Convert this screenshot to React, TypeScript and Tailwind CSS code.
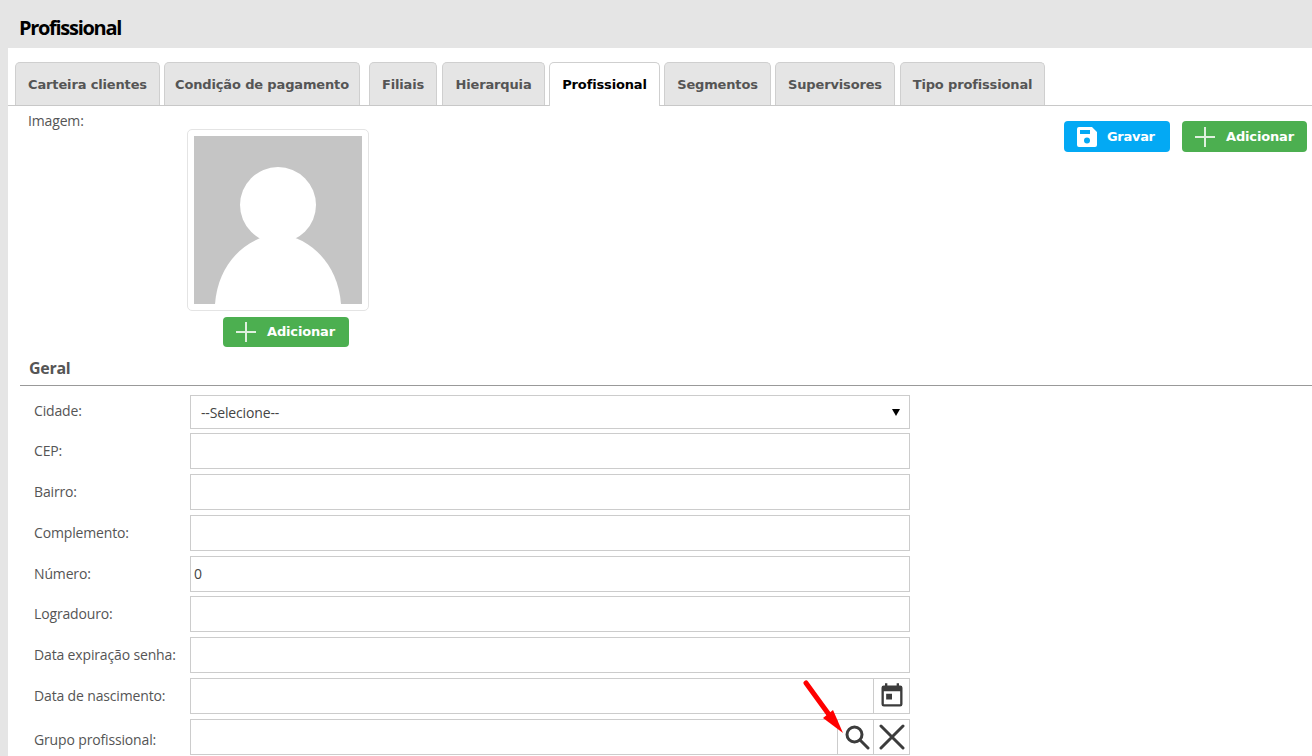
import { Fragment } from "react";

const tabs = [
  { label: "Carteira clientes", w: "w-[145px]", mr: "mr-[4px]" },
  { label: "Condição de pagamento", w: "w-[196px]", mr: "mr-[9px]" },
  { label: "Filiais", w: "w-[68px]", mr: "mr-[5px]" },
  { label: "Hierarquia", w: "w-[103px]", mr: "mr-[4px]" },
  { label: "Profissional", w: "w-[111px]", mr: "mr-[4px]", active: true },
  { label: "Segmentos", w: "w-[107px]", mr: "mr-[4px]" },
  { label: "Supervisores", w: "w-[120px]", mr: "mr-[5px]" },
  { label: "Tipo profissional", w: "w-[145px]", mr: "" },
];

const rows = [
  { label: "CEP:", h: "mb-[5px]" },
  { label: "Bairro:", h: "mb-[5px]" },
  { label: "Complemento:", h: "mb-[5px]" },
  { label: "Número:", h: "mb-[4px]", value: "0" },
  { label: "Logradouro:", h: "mb-[5px]" },
  { label: "Data expiração senha:", h: "mb-[5px]" },
];

function Plus({ className }: { className: string }) {
  return (
    <svg viewBox="0 0 20 20" className={className}>
      <path d="M0 10H20M10 0V20" stroke="#dff0df" strokeWidth="2" fill="none" />
    </svg>
  );
}

function AddButton({ className }: { className: string }) {
  return (
    <button className={`flex items-center rounded-[4px] bg-[#4caf50] pl-[13px] font-['DejaVu_Sans',sans-serif] text-[13px] font-bold tracking-[-0.15px] text-white ${className}`}>
      <Plus className="mr-[11px] h-[20px] w-[20px]" />
      Adicionar
    </button>
  );
}

function Field({ value }: { value?: string }) {
  return (
    <div className="flex h-[36px] w-[720px] items-center border border-[#cccccc] bg-white pb-[1px] pl-[3px] text-[14px] text-[#444444]">
      {value}
    </div>
  );
}

export default function App() {
  return (
    <div className="h-[756px] overflow-hidden bg-[#e5e5e5] font-['Open_Sans','Liberation_Sans',sans-serif] text-[14px] tracking-[-0.15px]">
      <div className="flex h-[48px] items-center pl-[19px] pt-[7px] text-[20px] font-bold tracking-[-1.3px] text-black">
        Profissional
      </div>

      <div className="relative ml-[8px] h-[708px] bg-white">
        <div className="flex h-[58px] items-end border-b border-[#c8c8c8] pl-[7px]">
          {tabs.map((t) => (
            <div
              key={t.label}
              className={`flex items-center justify-center rounded-t-[5px] border border-b-0 border-[#cfcfcf] font-['DejaVu_Sans',sans-serif] text-[13px] font-bold tracking-[-0.15px] ${t.w} ${t.mr} ${
                t.active ? "mb-[-1px] h-[44px] bg-white pt-[1px] text-black" : "h-[43px] bg-[#e5e5e5] pt-[2px] text-[#555555]"
              }`}
            >
              {t.label}
            </div>
          ))}
        </div>

        <div className="flex items-start pr-[5px]">
          <div className="w-[179px] pl-[20px] pt-[5px] leading-[19px] text-[#555555]">Imagem:</div>
          <div className="mt-[23px]">
            <div className="h-[182px] w-[182px] rounded-[5px] border border-[#e4e4e4] p-[6px]">
              <svg viewBox="0 0 168 168" className="h-[168px] w-[168px]">
                <rect width="168" height="168" fill="#c5c5c5" />
                <circle cx="84" cy="69" r="38" fill="#ffffff" />
                <path d="M21 168C24 130 48 103 84 97C120 103 144 130 147 168Z" fill="#ffffff" />
              </svg>
            </div>
            <AddButton className="ml-[36px] mt-[6px] h-[30px] w-[126px]" />
          </div>
          <div className="ml-auto mt-[15px] flex gap-[12px]">
            <button className="flex h-[31px] w-[106px] items-center rounded-[4px] bg-[#03a9f4] pl-[13px] font-['DejaVu_Sans',sans-serif] text-[13px] font-bold tracking-[-0.3px] text-white">
              <svg viewBox="0 0 20 20" className="mr-[10px] h-[20px] w-[20px]">
                <path fillRule="evenodd" fill="#ffffff" d="M2 0H15L20 5V18A2 2 0 0 1 18 20H2A2 2 0 0 1 0 18V2A2 2 0 0 1 2 0ZM3 3V7H13V3ZM10 10.5A3 3 0 1 0 10 16.5A3 3 0 1 0 10 10.5Z" />
              </svg>
              Gravar
            </button>
            <AddButton className="h-[31px] w-[125px]" />
          </div>
        </div>

        <div className="ml-[12px] mt-[6px] flex h-[33px] items-center border-b border-[#999999] pb-[2px] pl-[9px] text-[16px] font-bold tracking-[-0.3px] text-[#555555]">
          Geral
        </div>

        <div className="mt-[9px] grid grid-cols-[156px_720px] items-center pl-[26px]">
          <div className="mb-[4px] pb-[4px] text-[#555555]">Cidade:</div>
          <div className="mb-[4px] flex h-[34px] items-center justify-between border border-[#cccccc] pl-[10px] pr-[9px] text-[#444444]">
            --Selecione--
            <span className="h-0 w-0 border-x-[4px] border-t-[7px] border-x-transparent border-t-black" />
          </div>

          {rows.map((r) => (
            <Fragment key={r.label}>
              <div className={`${r.h} pb-[2px] text-[#555555]`}>{r.label}</div>
              <div className={r.h}>
                <Field value={r.value} />
              </div>
            </Fragment>
          ))}

          <div className="mb-[5px] pb-[2px] text-[#555555]">Data de nascimento:</div>
          <div className="mb-[5px] flex h-[36px] border border-[#cccccc]">
            <div className="flex-1" />
            <div className="flex w-[36px] items-center justify-center border-l border-[#cccccc]">
              <svg viewBox="0 0 24 24" className="h-[28px] w-[28px]" fill="#3c3c3c">
                <path d="M19 3h-1V1h-2v2H8V1H6v2H5a2 2 0 0 0-2 2v14a2 2 0 0 0 2 2h14a2 2 0 0 0 2-2V5a2 2 0 0 0-2-2zm0 16H5V8h14v11zM7 10h5v5H7z" />
              </svg>
            </div>
          </div>

          <div className="pt-[4px] text-[#555555]">Grupo profissional:</div>
          <div className="flex h-[36px] border border-[#cccccc]">
            <div className="flex-1" />
            <div className="flex w-[36px] items-center justify-center border-l border-[#cccccc] pl-[2px]">
              <svg viewBox="0 0 26 26" className="h-[26px] w-[26px]" fill="none" stroke="#3c3c3c" strokeWidth="3">
                <circle cx="10.5" cy="10.5" r="7.5" />
                <path d="M16 16L24 24" strokeLinecap="round" />
              </svg>
            </div>
            <div className="flex w-[36px] items-center justify-center border-l border-[#cccccc]">
              <svg viewBox="0 0 26 26" className="h-[26px] w-[26px]" fill="none" stroke="#3c3c3c" strokeWidth="3">
                <path d="M2 2L24 24M24 2L2 24" strokeLinecap="round" />
              </svg>
            </div>
          </div>
        </div>

        {/* seta vermelha da anotacao */}
        <svg viewBox="0 0 44 56" className="absolute left-[795px] top-[632px] h-[56px] w-[44px]">
          <path d="M3 3L27 36" stroke="#ff0000" strokeWidth="5" strokeLinecap="round" fill="none" />
          <path d="M20 38L30 30L40 53Z" fill="#ff0000" />
        </svg>
      </div>
    </div>
  );
}
